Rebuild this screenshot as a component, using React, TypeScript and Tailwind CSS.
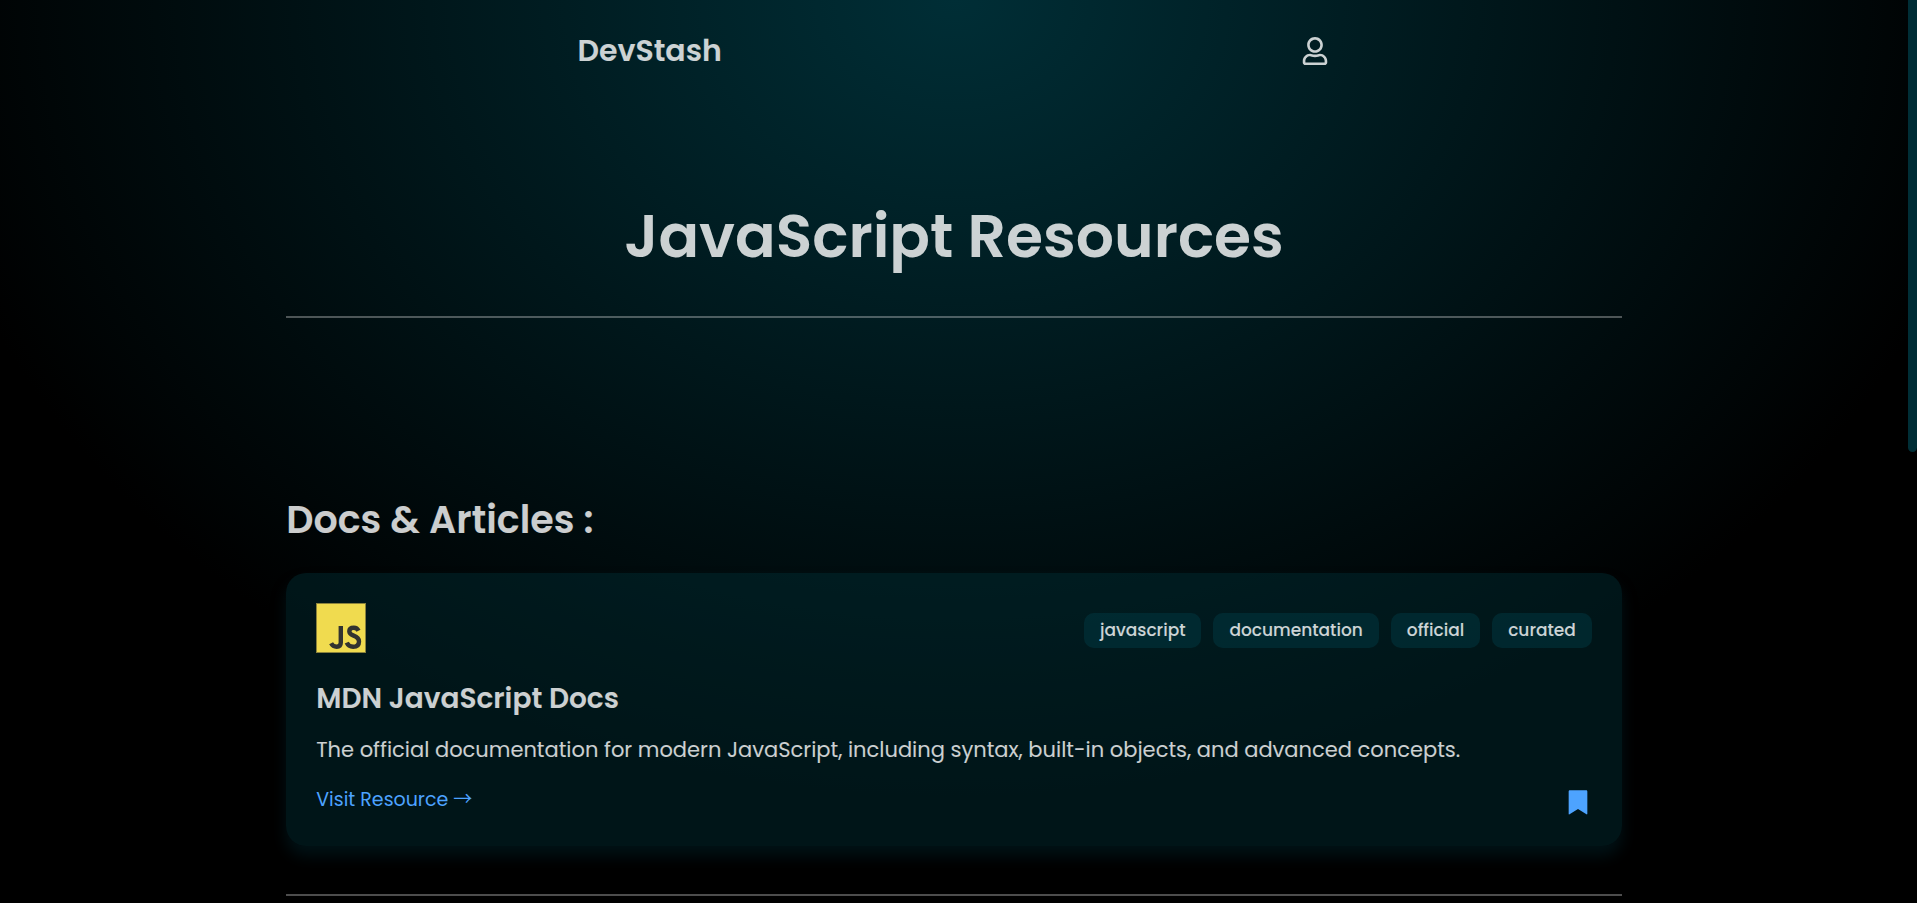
import { FaRegUser } from "react-icons/fa";
import { RiBookmarkFill } from "react-icons/ri";

const tags = ["javascript", "documentation", "official", "curated"];

function JsLogo() {
  return (
    <svg viewBox="0 0 50 50" className="size-[50px]" role="img" aria-label="JavaScript">
      <rect x="0.5" y="0.5" width="49" height="49" fill="#f0db4f" stroke="#8b823c" />
      <path d="M24.8 23v16.5q0 4.2-4.1 4.2-3.8 0-5.6-3.4" fill="none" stroke="#323330" strokeWidth="4.4" />
      <path
        d="M42.5 27.8q-1.4-3-4.6-3-4.6 0-4.6 3.5 0 2.7 4.3 4.3 5.4 2 5.4 5.8 0 5.3-5.9 5.3-4.6 0-6.4-4"
        fill="none"
        stroke="#323330"
        strokeWidth="4.4"
      />
    </svg>
  );
}

function Header() {
  return (
    <header className="mx-auto flex h-[102px] w-[40%] items-center justify-between px-[5px]">
      <a href="#home" className="text-3xl font-semibold">
        DevStash
      </a>
      <button type="button" aria-label="Account" className="mr-0.5">
        <FaRegUser size={28} />
      </button>
    </header>
  );
}

function ResourceCard() {
  return (
    <article className="rounded-[20px] bg-[#002e36]/45 p-[30px] shadow-[0_10px_15px_rgba(0,46,54,0.4)]">
      <div className="flex items-center justify-between">
        <JsLogo />
        <ul className="flex gap-3 pt-1">
          {tags.map((tag) => (
            <li key={tag} className="rounded-[10px] bg-[#003c46]/45 px-4 py-1 text-[17px] leading-[27px] font-medium">
              {tag}
            </li>
          ))}
        </ul>
      </div>
      <h3 className="mt-[25px] text-[28px] leading-[42px] font-semibold">MDN JavaScript Docs</h3>
      <p className="mt-3 text-[21px] leading-[36px]">
        The official documentation for modern JavaScript, including syntax, built-in objects, and advanced concepts.
      </p>
      <div className="mt-[17px] flex items-start justify-between">
        <a href="#mdn" className="text-[19px] leading-[30px] text-[#4da3ff]">
          Visit Resource <span className="font-['Noto_Sans_CJK_SC',sans-serif] leading-none">→</span>
        </a>
        <button type="button" aria-label="Bookmark" className="pt-[3px] text-[#4da3ff]">
          <RiBookmarkFill size={28} />
        </button>
      </div>
    </article>
  );
}

export default function App() {
  return (
    <div className="flex h-screen overflow-hidden bg-black font-[Poppins,'Liberation_Sans',sans-serif] text-white/80">
      <div className="min-w-0 flex-1 overflow-hidden bg-[radial-gradient(55%_90%_at_top,#002e36,#000)]">
        <Header />
        <main className="mx-auto w-[70%]">
          <h1 className="border-b-2 border-white/30 pt-[89px] pb-[35px] text-center text-[60px] leading-[90px] font-semibold">
            JavaScript Resources
          </h1>
          <section className="mt-[173px] border-b-2 border-white/30 pb-12">
            <h2 className="mb-[25px] text-[38px] leading-[57px] font-semibold">Docs &amp; Articles :</h2>
            <ResourceCard />
          </section>
        </main>
      </div>
      <div aria-hidden="true" className="w-[9px] bg-black">
        <div className="h-1/2 rounded-b-full bg-[#002e36]" />
      </div>
    </div>
  );
}
